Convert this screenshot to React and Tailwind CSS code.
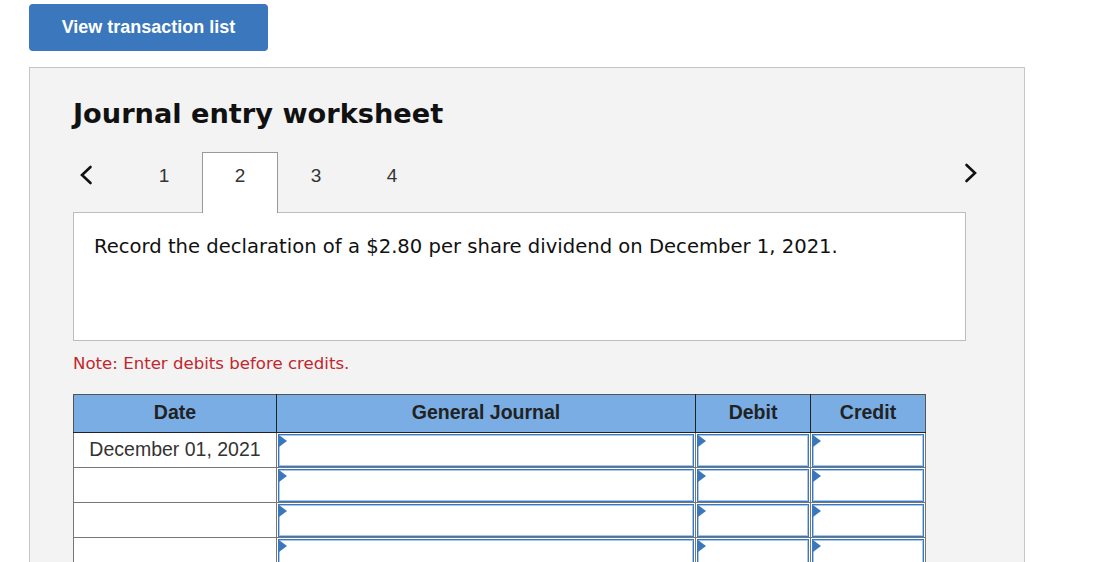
import React from "react";

function Chevron({ dir }) {
  return (
    <svg width="14" height="22" viewBox="0 0 14 22" className="block">
      {dir === "left" ? (
        <polyline points="11.5,3 3,11 11.5,19" fill="none" stroke="#111" strokeWidth="2.6" strokeLinecap="round" strokeLinejoin="miter" />
      ) : (
        <polyline points="2.5,3 11,11 2.5,19" fill="none" stroke="#111" strokeWidth="2.6" strokeLinecap="round" strokeLinejoin="miter" />
      )}
    </svg>
  );
}

function InputCell() {
  return (
    <td className="border border-[#777] p-0 h-[35px] bg-white">
      <div className="relative h-[33px] mx-px border border-[#3b77bd] shadow-[inset_0_0_0_1px_#a9c7ea] bg-white">
        <div className="absolute left-0 top-0 w-0 h-0 border-t-[6px] border-b-[6px] border-l-[8px] border-t-transparent border-b-transparent border-l-[#3b77bd]" />
      </div>
    </td>
  );
}

export default function App() {
  const rows = ["December 01, 2021", "", "", "", "", ""];
  return (
    <div className="bg-white min-h-screen pt-[4px] pl-[29px]" style={{ fontFamily: '"Liberation Sans", Arial, sans-serif' }}>
      <button className="w-[239px] h-[47px] rounded-[4px] bg-[#3a77bd] text-white font-bold text-[18px] flex items-center justify-center" style={{ fontFamily: '"Liberation Sans", Arial, sans-serif' }}>
        View transaction list
      </button>

      <div className="mt-[16px] w-[996px] border border-[#c6c6c6] bg-[#f3f3f3] pl-[43px] pt-[30px] pb-[40px]">
        <h1 className="text-[27.2px] leading-[32px] font-bold text-[#111]" style={{ fontFamily: '"DejaVu Sans", Verdana, sans-serif' }}>
          Journal entry worksheet
        </h1>

        <div className="mt-[22px] w-[905px] flex items-start relative z-10">
          <div className="w-[53px] pl-[6px] pt-[12px]">
            <Chevron dir="left" />
          </div>
          {[1, 2, 3, 4].map((n) => (
            <div
              key={n}
              className={
                n === 2
                  ? "w-[76px] h-[61px] bg-white border border-b-0 border-[#9a9a9a] text-center pt-[12px] text-[19px] leading-[22px] text-[#333]"
                  : "w-[76px] h-[61px] text-center pt-[13px] text-[19px] leading-[22px] text-[#333]"
              }
            >
              {n}
            </div>
          ))}
          <div className="flex-1" />
          <div className="pt-[10px]">
            <Chevron dir="right" />
          </div>
        </div>

        <div className="-mt-px w-[893px] h-[129px] bg-white border border-[#bdbdbd] pl-[20px] pt-[22px]">
          <p className="text-[19.6px] leading-[24px] text-[#111]" style={{ fontFamily: '"DejaVu Sans", Verdana, sans-serif' }}>
            Record the declaration of a $2.80 per share dividend on December 1, 2021.
          </p>
        </div>

        <p className="mt-[13px] text-[16.6px] leading-[20px] text-[#c1272d]" style={{ fontFamily: '"DejaVu Sans", Verdana, sans-serif' }}>
          Note: Enter debits before credits.
        </p>

        <table className="mt-[20px] w-[852px] table-fixed border-collapse">
          <colgroup>
            <col style={{ width: "203px" }} />
            <col style={{ width: "419px" }} />
            <col style={{ width: "115px" }} />
            <col style={{ width: "115px" }} />
          </colgroup>
          <thead>
            <tr className="h-[38px] bg-[#79ade3]">
              <th className="border border-[#555] border-r-[#222] border-b-[#222] text-[19.5px] font-bold text-[#222] pb-[2px]">Date</th>
              <th className="border border-[#555] border-x-[#222] border-b-[#222] text-[19.5px] font-bold text-[#222] pb-[2px]">General Journal</th>
              <th className="border border-[#555] border-x-[#222] border-b-[#222] text-[19.5px] font-bold text-[#222] pb-[2px]">Debit</th>
              <th className="border border-[#555] border-l-[#222] border-b-[#222] text-[19.5px] font-bold text-[#222] pb-[2px]">Credit</th>
            </tr>
          </thead>
          <tbody>
            {rows.map((d, i) => (
              <tr key={i} className="h-[35px]">
                <td className="border border-[#777] bg-white text-center text-[19.5px] text-[#333] pb-[1px] p-0">{d}</td>
                <InputCell />
                <InputCell />
                <InputCell />
              </tr>
            ))}
          </tbody>
        </table>
      </div>
    </div>
  );
}
